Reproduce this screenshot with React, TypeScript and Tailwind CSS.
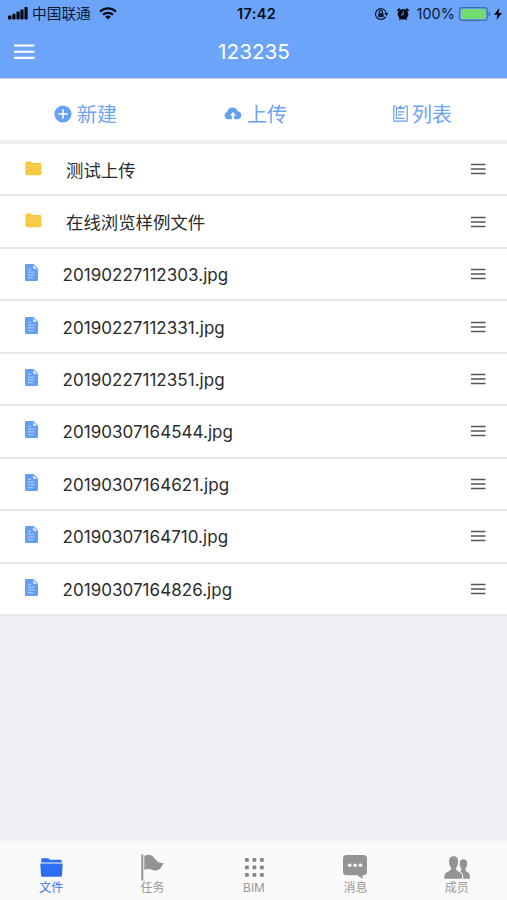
import type { ReactNode } from 'react';

const folders = ['测试上传', '在线浏览样例文件'];

const files = [
  '20190227112303.jpg',
  '20190227112331.jpg',
  '20190227112351.jpg',
  '20190307164544.jpg',
  '20190307164621.jpg',
  '20190307164710.jpg',
  '20190307164826.jpg',
];

function StatusBar() {
  return (
    <div className="flex h-7 items-center text-[#0b1830]">
      <div className="flex flex-1 items-center pl-2">
        <svg width="20" height="13" viewBox="0 0 20 13" fill="#050b16">
          <rect x="0" y="8.5" width="3.4" height="4" rx="1" />
          <rect x="4.2" y="6.8" width="3.4" height="5.7" rx="1" />
          <rect x="8.4" y="4.6" width="3.4" height="7.9" rx="1" />
          <rect x="12.4" y="2.4" width="3.2" height="10.1" rx="1" />
          <rect x="16.4" y="0" width="3.3" height="12.5" rx="1" />
        </svg>
        <span className="ml-1 text-[14.7px] leading-none">中国联通</span>
        <svg className="ml-2" width="18" height="13" viewBox="0 0 18 13" fill="none" stroke="#050b16">
          <path d="M1 4.6a11.5 11.5 0 0 1 16 0" strokeWidth="2.3" />
          <path d="M4 7.8a7.2 7.2 0 0 1 10 0" strokeWidth="2.2" />
          <path d="M9 12.6 6.2 9.8a4 4 0 0 1 5.600 0z" fill="#050b16" stroke="none" />
        </svg>
      </div>
      <span className="pl-[3px] text-[14.5px] leading-none font-semibold tracking-[0.35px] text-[#050b16]">17:42</span>
      <div className="flex flex-1 items-center justify-end pr-[5px]">
        <svg width="15" height="14" viewBox="0 0 15 14" fill="none" stroke="#0b1830" strokeWidth="1.2">
          <path d="M11.7 9.6A5.4 5.4 0 1 1 12.2 6" />
          <path d="M10.2 6h4.2l-2 3z" fill="#0b1830" stroke="none" />
          <rect x="4.2" y="6.2" width="5.4" height="4" rx=".4" fill="#0b1830" stroke="none" />
          <path d="M5.3 6.5V5.3a1.6 1.6 0 0 1 3.2 0v1.2" />
        </svg>
        <svg className="ml-[7px]" width="14" height="14" viewBox="0 0 14 14">
          <circle cx="7" cy="7.300" r="5.300" fill="#050b16" />
          <path d="M1.400 3.900 3.900 1.600M12.600 3.900 10.100 1.600" stroke="#050b16" strokeWidth="1.900" />
          <path d="M3.400 12.700l1-1.200M10.600 12.700l-1-1.200" stroke="#050b16" strokeWidth="1.400" />
          <path d="M7.200 4.400v3.400L5 8" stroke="#6ba4f8" strokeWidth="1" fill="none" />
        </svg>
        <span className="ml-[6px] text-[14.4px] leading-none tracking-[0.1px]">100%</span>
        <svg className="ml-1" width="32" height="14" viewBox="0 0 32 14">
          <rect x=".6" y=".6" width="27.6" height="12.8" rx="2.5" fill="none" stroke="#3d6ea8" strokeWidth="1.1" />
          <rect x="2" y="2" width="24.8" height="10" rx="1.2" fill="#72dc72" />
          <path d="M29.6 4.6q1.7.5 1.7 2.4t-1.7 2.4z" fill="#3d6ea8" />
        </svg>
        <svg className="ml-[3px]" width="8" height="12" viewBox="0 0 8 12" fill="#050b16">
          <path d="M5.3 0 0 6.8h3.3L2.5 12 8 5H4.7z" />
        </svg>
      </div>
    </div>
  );
}

function FolderIcon() {
  return (
    <svg width="17" height="15" viewBox="0 0 17 15">
      <path d="M.5 5V1.8Q.5.5 1.8.5h3.7L7 2h8q1.2 0 1.2 1.3V5z" fill="#f4c63e" />
      <path d="M1 4.3h14.8" stroke="#fbdc80" strokeWidth=".8" />
      <path d="M.3 4.8h16.2v8q0 1.4-1.4 1.4H1.7Q.3 14.2.3 12.8z" fill="#f8ca43" />
    </svg>
  );
}

function FileIcon() {
  return (
    <svg width="13" height="17" viewBox="0 0 13 17">
      <path d="M1.2 0H8.6L13 4.6v11.2q0 1.2-1.2 1.2H1.2Q0 17 0 15.8V1.2Q0 0 1.2 0z" fill="#659ff4" />
      <path d="M8.4 1.2v3.6h3.6z" fill="#f1f6ff" />
      <path d="M3 5.3h3M3 8.1h6.5M3 10.9h6.5M3 13.7h5" stroke="#c0d9ff" strokeWidth=".9" />
    </svg>
  );
}

function Row({ name, folder = false }: { name: string; folder?: boolean }) {
  return (
    <li className="flex h-[52.45px] items-center border-b-2 border-[#e5e5e6] bg-white pr-[21px] pl-[25px]">
      <span className={folder ? 'flex w-[41px] pb-[2px]' : 'flex w-[37.5px] pb-[3px]'}>
        {folder ? <FolderIcon /> : <FileIcon />}
      </span>
      <span
        className={
          folder
            ? 'flex-1 pt-[2px] text-[17.4px] leading-none text-[#2b2b2b]'
            : 'flex-1 pt-[3px] text-[17px] leading-none tracking-[0.04px] text-[#2b2b2b]'
        }
      >
        {name}
      </span>
      <svg width="15" height="12" viewBox="0 0 15 12" stroke="#555" strokeWidth="1.7">
        <path d="M0 1.5h14.500M0 6h14.500M0 10.5h14.500" />
      </svg>
    </li>
  );
}

function Action({ label, icon, className }: { label: string; icon: ReactNode; className: string }) {
  return (
    <button className={`flex items-center text-[20px] leading-none text-[#6ba4f4] ${className}`}>
      {icon}
      <span className="pt-[3px]">{label}</span>
    </button>
  );
}

function Tab({ label, icon, active = false }: { label: string; icon: ReactNode; active?: boolean }) {
  return (
    <button
      className={`flex flex-1 flex-col items-center text-[12px] leading-none ${active ? 'text-[#3478f0]' : 'text-[#989898]'}`}
    >
      <span className="flex h-[40px] items-center pt-[12px] pl-px">{icon}</span>
      <span className="pt-px pl-px">{label}</span>
    </button>
  );
}

export default function App() {
  return (
    <div className="flex h-[900px] w-[507px] flex-col overflow-hidden bg-[#eeeef3] font-[Inter,'Noto_Sans_CJK_SC',sans-serif]">
      <header className="h-[79px] border-b border-[#c3d3ec] bg-[#6ba4f8]">
        <StatusBar />
        <div className="flex h-[48px] items-center px-[14px] text-white">
          <svg width="21" height="16" viewBox="0 0 21 16" stroke="currentColor" strokeWidth="2.1">
            <path d="M0 1.500h20.500M0 7.700h20.500M0 13.900h20.500" />
          </svg>
          <h1 className="flex-1 pt-px pr-[20px] text-center text-[20.7px] leading-none">123235</h1>
        </div>
      </header>

      <div className="flex h-[65px] items-center border-b-4 border-[#efefef] bg-white pt-[8px]">
        <Action
          label="新建"
          className="ml-[54px] gap-[5px]"
          icon={
            <svg width="18" height="18" viewBox="0 0 18 18">
              <circle cx="9" cy="9" r="8.6" fill="#65a0f4" />
              <path d="M9 4.3v9.4M4.3 9h9.4" stroke="white" strokeWidth="1.5" />
            </svg>
          }
        />
        <Action
          label="上传"
          className="ml-[107px] gap-[5px]"
          icon={
            <svg width="18" height="13" viewBox="0 0 18 13">
              <path d="M4 12.3A3.8 3.8 0 0 1 3 5Q4 .4 8.5.4q4 0 5.2 3.8A4.1 4.1 0 0 1 14 12.3z" fill="#65a0f4" />
              <path d="M9 5 5.9 8.4h2v4.6h2.2V8.4h2z" fill="white" />
            </svg>
          }
        />
        <Action
          label="列表"
          className="ml-[106px] gap-[4px]"
          icon={
            <svg width="15" height="17" viewBox="0 0 15 17" fill="none" stroke="#65a0f4" strokeWidth="1.2">
              <path d="M3.2 1.2H.8v15h13.4v-15h-2.600" />
              <path d="M4.3 4h6.4V2.6H9Q8.7.5 7.5.5T6 2.6H4.3z" fill="#65a0f4" stroke="none" />
              <path d="M3.5 2v11.800M11.300 2v2M5 6.8h6.4M5 9.7h4.5M4 13.4h7.4" />
            </svg>
          }
        />
      </div>

      <main className="flex-1">
        <ul>
          {folders.map((name) => (
            <Row key={name} name={name} folder />
          ))}
          {files.map((name) => (
            <Row key={name} name={name} />
          ))}
        </ul>
      </main>

      <nav className="flex h-[60px] border-t border-[#f3f3f5] bg-[#fafafa]">
        <Tab
          active
          label="文件"
          icon={
            <svg width="23" height="19" viewBox="0 0 23 19" fill="#2d6ff2">
              <path d="M1.2 4.5V1.4Q1.2.3 2.3.3h6l1.4 1.5h10.8q1.2 0 1.2 1.2v1.5z" />
              <path d="M.3 5.6h22.4L22 17.4q-.1 1.3-1.4 1.3H2.4q-1.3 0-1.4-1.3z" />
            </svg>
          }
        />
        <Tab
          label="任务"
          icon={
            <svg width="23" height="27" viewBox="0 0 23 27" fill="#939393">
              <rect x=".3" y=".5" width="2" height="26" />
              <path d="M3.3 2C7.5-.2 10.8.8 13.2 4c2.4 3.2 5.4 5.4 9.3 5-2.6 6.4-6.2 8.6-10.2 7.2-3.6-1.4-6-1.6-9-.2z" />
            </svg>
          }
        />
        <Tab
          label="BIM"
          icon={
            <svg width="19" height="19" viewBox="0 0 19 19" fill="#858585">
              {[0, 7.5, 15].map((y) =>
                [0, 7.5, 15].map((x) => <rect key={`${x}-${y}`} x={x} y={y} width="3.8" height="3.8" rx=".9" />),
              )}
            </svg>
          }
        />
        <Tab
          label="消息"
          icon={
            <svg width="24" height="24" viewBox="0 0 24 24">
              <path
                d="M3.5 0h17Q24 0 24 3.5v13.3q0 3.4-3.5 3.4h-1V24l-5-3.8h-11Q0 20.2 0 16.8V3.5Q0 0 3.5 0z"
                fill="#949494"
              />
              <g fill="white">
                <circle cx="6.7" cy="10.2" r="1.8" />
                <circle cx="12.1" cy="10.2" r="1.8" />
                <circle cx="17.5" cy="10.2" r="1.8" />
              </g>
            </svg>
          }
        />
        <Tab
          label="成员"
          icon={
            <svg width="26" height="23" viewBox="0 0 26 23" fill="#949494">
              <path d="M9.600 .2c3.200 0 4.600 2 4.500 5 .2 3-.8 5-1.900 6.200-.2 2.600.5 3.400 2.700 4.300 2.800 1 3.300 2.700 3.400 7.100H.2c.1-4.400 1-6 3.800-7.100 2.300-.9 3.200-1.700 3-4.300C5.800 10.200 4.900 8.200 5.100 5.200c-.1-3 1.300-5 4.500-5z" />
              <path d="M19.400 3.200c2.600 0 3.800 1.700 3.700 4.300 0 2.300-.6 3.900-1.600 5-.2 2.300.2 2.900 1.900 3.700 2.100.9 2.500 2.700 2.600 6.600h-6.600c-.1-4-.8-6.200-3.300-7.600.9-.6 1.300-1.300 1.100-2.700-.9-1-1.500-2.700-1.500-5-.1-2.600 1.200-4.300 3.700-4.300z" />
            </svg>
          }
        />
      </nav>
    </div>
  );
}
